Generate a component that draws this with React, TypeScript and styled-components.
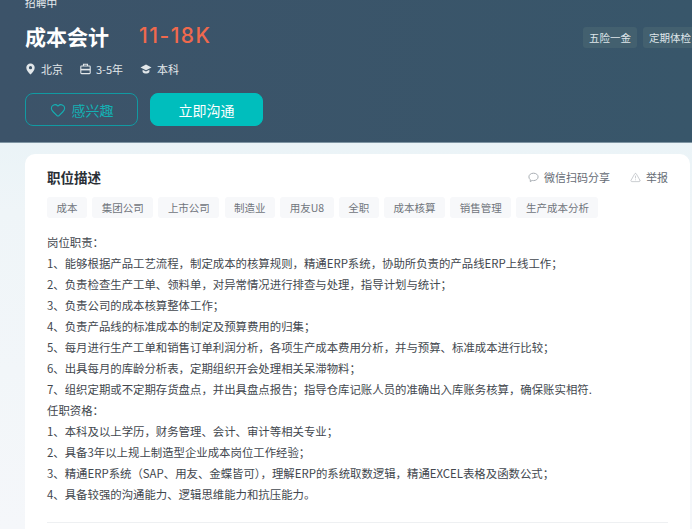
import React from "react";
import styled, { createGlobalStyle } from "styled-components";
import { Heart, TriangleAlert } from "lucide-react";

const Global = createGlobalStyle`
  html, body { margin: 0; padding: 0; height: 100%; overflow: hidden; }
  body { font-family: "Noto Sans CJK SC", "Liberation Sans", sans-serif; background: #f4f7fa; }
`;

const Page = styled.div`
  width: 692px;
  height: 529px;
  overflow: hidden;
  display: flex;
  flex-direction: column;
  background: linear-gradient(180deg, #e1f0f5 0%, #eff5f8 40%, #f5f7fa 100%);
`;
const Hero = styled.header`
  flex: none;
  height: 143px;
  box-sizing: border-box;
  padding: 0 0 0 25px;
  display: flex;
  justify-content: space-between;
  overflow: hidden;
  background: linear-gradient(90deg, #3c5369 0%, #38566a 100%);
  border-bottom: 1px solid #7f95a3;
`;
const HeroMain = styled.div`
  display: flex;
  flex-direction: column;
  align-items: flex-start;
`;
const Status = styled.div`
  margin-top: -5px;
  height: 16px;
  line-height: 16px;
  font-size: 10.7px;
  color: #e6ebee;
`;
const TitleRow = styled.div`
  margin-top: 11px;
  height: 28px;
  display: flex;
  align-items: center;
  gap: 30px;
`;
const JobTitle = styled.h1`
  margin: 0;
  font-size: 21px;
  line-height: 28px;
  font-weight: 700;
  color: #fff;
`;
const Salary = styled.div`
  font-family: Inter, "Liberation Sans", sans-serif;
  font-size: 21px;
  font-weight: 500;
  line-height: 24px;
  letter-spacing: 1.5px;
  color: #f0694d;
`;
const Meta = styled.div`
  margin-top: 11px;
  height: 16px;
  display: flex;
  align-items: center;
  gap: 17px;
`;
const MetaItem = styled.span`
  display: inline-flex;
  align-items: center;
  gap: 5px;
  font-size: 11px;
  color: #e2e7ea;
  svg { display: block; }
`;
const Actions = styled.div`
  margin-top: 16px;
  display: flex;
  gap: 12px;
`;
const ActionButton = styled.button<{ $solid?: boolean }>`
  width: 113px;
  height: 33px;
  box-sizing: border-box;
  padding: 0;
  border-radius: 8px;
  border: 1px solid ${(p) => (p.$solid ? "#00bebd" : "#119aa2")};
  background: ${(p) => (p.$solid ? "#00bebd" : "transparent")};
  color: ${(p) => (p.$solid ? "#fff" : "#14b1b4")};
  font-family: inherit;
  font-size: 14px;
  display: flex;
  align-items: center;
  justify-content: center;
  gap: 6px;
`;
const Benefits = styled.div`
  margin-top: 27px;
  display: flex;
  gap: 6px;
  flex: none;
  width: 109px;
  overflow: hidden;
  align-self: flex-start;
`;
const Benefit = styled.span`
  flex: none;
  height: 21px;
  line-height: 21px;
  padding: 0 6px;
  border-radius: 3px;
  font-size: 10.5px;
  color: #dfe6ea;
  background: #43606f;
`;
const Card = styled.section`
  margin: 11px 2px 0 25px;
  flex: 1;
  padding: 13px 22px 0 22px;
  background: #fff;
  border-radius: 10px 10px 0 0;
  overflow: hidden;
`;
const CardHead = styled.div`
  display: flex;
  justify-content: space-between;
  align-items: center;
  height: 20px;
`;
const CardTitle = styled.h2`
  margin: 0;
  font-size: 13.5px;
  line-height: 20px;
  font-weight: 700;
  color: #2a2f36;
`;
const HeadActions = styled.div`
  display: flex;
  gap: 20px;
`;
const HeadAction = styled.span`
  display: inline-flex;
  align-items: center;
  gap: 5px;
  font-size: 11px;
  color: #666c75;
  svg { display: block; color: #a8adb3; }
`;
const Tags = styled.div`
  margin-top: 10px;
  display: flex;
  gap: 5.2px;
`;
const Tag = styled.span`
  height: 21px;
  line-height: 21px;
  padding: 0 9.5px;
  border-radius: 3px;
  font-size: 10.5px;
  color: #70757c;
  background: #f7f8fa;
  white-space: nowrap;
`;
const Description = styled.div`
  margin-top: 14px;
  font-size: 11.4px;
  line-height: 21px;
  color: #42474e;
`;
const Line = styled.div`
  white-space: nowrap;
`;
const Divider = styled.div`
  margin-top: 17px;
  height: 1px;
  background: #eef0f2;
`;

const PinIcon = () => (
  <svg width="11" height="12" viewBox="0 0 11 12" fill="#e2e7ea">
    <path fillRule="evenodd" d="M5.5 0.5a4.2 4.2 0 0 1 4.2 4.2c0 2.6-2.6 5.3-4.2 6.8-1.6-1.5-4.2-4.2-4.2-6.8A4.2 4.2 0 0 1 5.5.5Zm0 2.6a1.6 1.6 0 1 0 0 3.2 1.6 1.6 0 0 0 0-3.2Z" />
  </svg>
);
const BagIcon = () => (
  <svg width="11" height="12" viewBox="0 0 11 12" fill="none" stroke="#e2e7ea" strokeWidth="1.1">
    <path d="M3.5 3V1.2h4V3" />
    <rect x="0.8" y="3" width="9.4" height="7.6" rx="0.8" />
    <path d="M.8 6.6h9.4" strokeWidth="1.6" />
  </svg>
);
const CapIcon = () => (
  <svg width="12" height="12" viewBox="0 0 12 12" fill="#e2e7ea">
    <path d="M6 1.5 11.5 4.4 6 7.3.5 4.4Z" />
    <path d="M2.6 6.8 6 8.6l3.4-1.8v2.1C8.6 10 7.3 10.6 6 10.6S3.4 10 2.6 8.9Z" />
  </svg>
);
const ChatIcon = () => (
  <svg width="11" height="11" viewBox="0 0 11 11" fill="none" stroke="currentColor" strokeWidth="1">
    <path d="M5.5 1.2c2.6 0 4.6 1.6 4.6 3.7S8.1 8.6 5.5 8.6c-.5 0-1 0-1.4-.2L2.3 9.7V7.7C1.400 7 .9 6 .9 4.900.9 2.800 2.900 1.200 5.500 1.200Z" />
  </svg>
);

const tags = ["成本", "集团公司", "上市公司", "制造业", "用友U8", "全职", "成本核算", "销售管理", "生产成本分析"];
const lines = [
  "岗位职责：",
  "1、能够根据产品工艺流程，制定成本的核算规则，精通ERP系统，协助所负责的产品线ERP上线工作；",
  "2、负责检查生产工单、领料单，对异常情况进行排查与处理，指导计划与统计；",
  "3、负责公司的成本核算整体工作；",
  "4、负责产品线的标准成本的制定及预算费用的归集；",
  "5、每月进行生产工单和销售订单利润分析，各项生产成本费用分析，并与预算、标准成本进行比较；",
  "6、出具每月的库龄分析表，定期组织开会处理相关呆滞物料；",
  "7、组织定期或不定期存货盘点，并出具盘点报告；指导仓库记账人员的准确出入库账务核算，确保账实相符.",
  "任职资格：",
  "1、本科及以上学历，财务管理、会计、审计等相关专业；",
  "2、具备3年以上规上制造型企业成本岗位工作经验；",
  "3、精通ERP系统（SAP、用友、金蝶皆可），理解ERP的系统取数逻辑，精通EXCEL表格及函数公式；",
  "4、具备较强的沟通能力、逻辑思维能力和抗压能力。",
];

export default function App() {
  return (
    <Page>
      <Global />
      <Hero>
        <HeroMain>
          <Status>招聘中</Status>
          <TitleRow>
            <JobTitle>成本会计</JobTitle>
            <Salary>11-18K</Salary>
          </TitleRow>
          <Meta>
            <MetaItem><PinIcon />北京</MetaItem>
            <MetaItem><BagIcon />3-5年</MetaItem>
            <MetaItem><CapIcon />本科</MetaItem>
          </Meta>
          <Actions>
            <ActionButton><Heart size={16} strokeWidth={1.6} />感兴趣</ActionButton>
            <ActionButton $solid>立即沟通</ActionButton>
          </Actions>
        </HeroMain>
        <Benefits>
          <Benefit>五险一金</Benefit>
          <Benefit>定期体检</Benefit>
        </Benefits>
      </Hero>
      <Card>
        <CardHead>
          <CardTitle>职位描述</CardTitle>
          <HeadActions>
            <HeadAction><ChatIcon />微信扫码分享</HeadAction>
            <HeadAction><TriangleAlert size={11} strokeWidth={1.3} />举报</HeadAction>
          </HeadActions>
        </CardHead>
        <Tags>
          {tags.map((t) => <Tag key={t}>{t}</Tag>)}
        </Tags>
        <Description>
          {lines.map((l) => <Line key={l}>{l}</Line>)}
        </Description>
        <Divider />
      </Card>
    </Page>
  );
}
